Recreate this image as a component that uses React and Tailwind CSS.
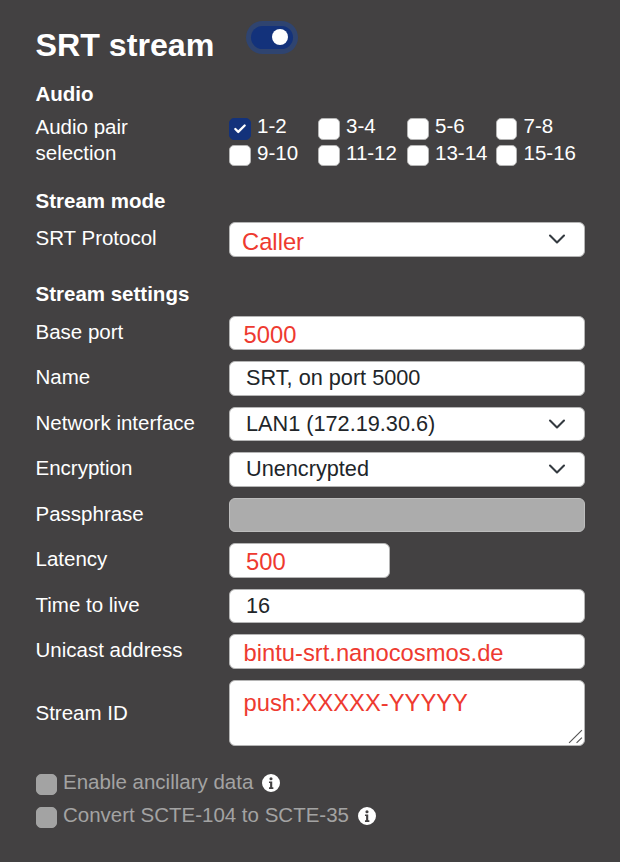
import React from 'react';
import { ChevronDown, Check } from 'lucide-react';

const audioPairs = ['1-2', '3-4', '5-6', '7-8', '9-10', '11-12', '13-14', '15-16'];

function Row({ label, children }) {
  return (
    <div className="flex items-center h-[34.5px]">
      <div className="w-[193.5px] shrink-0 -mt-[2px]">{label}</div>
      <div className="flex-1">{children}</div>
    </div>
  );
}

function Field({ value, red, large, className = 'w-full' }) {
  return (
    <input
      readOnly
      value={value}
      className={`${className} h-[34.5px] rounded-[6px] border border-[#b5b5b5] bg-white outline-none ${
        red ? 'text-[#ee3a30] text-[23.75px] pt-[4px]' : 'text-[#212529] text-[21.7px]'
      } ${large ? 'pl-[13.5px]' : 'pl-[16px]'}`}
    />
  );
}

function Dropdown({ value, red }) {
  return (
    <div className="relative">
      <select
        defaultValue={value}
        className={`w-full h-[34.5px] appearance-none rounded-[6px] border border-[#b5b5b5] bg-white outline-none ${
          red ? 'pl-[12px] pt-[5px] text-[#ee3a30] text-[23.75px]' : 'pl-[16px] text-[#212529] text-[21.7px]'
        }`}
      >
        <option>{value}</option>
      </select>
      <ChevronDown className="absolute right-[14px] top-[3px] w-[28px] h-[28px] text-[#343a40] pointer-events-none" strokeWidth={1.8} />
    </div>
  );
}

function Box({ checked, disabled }) {
  return (
    <span
      className={`flex items-center justify-center w-[21.5px] h-[21.5px] shrink-0 rounded-[5px] border ${
        checked ? 'bg-[#13327b] border-[#13327b]' : disabled ? 'bg-[#a3a3a3] border-[#a3a3a3]' : 'bg-white border-[#b5b5b5]'
      }`}
    >
      {checked && <Check className="w-[14px] h-[14px] text-white" strokeWidth={4} />}
    </span>
  );
}

function InfoIcon() {
  return (
    <svg viewBox="0 0 16 16" className="w-[18px] h-[18px] shrink-0" fill="white">
      <path d="M8 0a8 8 0 1 0 0 16A8 8 0 0 0 8 0zm0 2.8a1.4 1.4 0 1 1 0 2.8 1.4 1.4 0 0 1 0-2.8zM6.2 6.6h2.9v5.2h1v1.5H6.2v-1.5h1V8.1h-1V6.6z" fillRule="evenodd" />
    </svg>
  );
}

export default function App() {
  return (
    <div className="w-[620px] h-[862px] overflow-hidden bg-[#434142] text-white text-[20.5px] leading-[26px] pl-[35.5px] pr-[35px] font-['Liberation_Sans',Arial,sans-serif]">
      <div className="flex items-start h-[81px]">
        <h1 className="text-[32.2px] font-bold leading-[37px] mt-[27px]">SRT stream</h1>
        <div className="ml-[37px] mt-[25.5px] flex items-center justify-end w-[42px] h-[23px] rounded-full bg-[#13327b] ring-[5px] ring-[#2f4470] pr-[5px]">
          <span className="w-[16px] h-[16px] rounded-full bg-white" />
        </div>
      </div>

      <div className="font-bold leading-[26px]">Audio</div>
      <div className="flex mt-[7px] h-[52px]">
        <div className="w-[193.5px] shrink-0">Audio pair<br />selection</div>
        <div className="grid grid-cols-[89px_89px_88.5px_auto] content-start">
          {audioPairs.map((pair, i) => (
            <div key={pair} className="flex items-start h-[26.5px] gap-[6.5px]">
              <span className="mt-[4px]"><Box checked={i === 0} /></span>
              <span className="-mt-[1px]">{pair}</span>
            </div>
          ))}
        </div>
      </div>

      <div className="font-bold mt-[22px]">Stream mode</div>
      <div className="mt-[8px]">
        <Row label="SRT Protocol"><Dropdown value="Caller" red /></Row>
      </div>

      <div className="font-bold mt-[24px]">Stream settings</div>
      <div className="flex flex-col gap-[11px] mt-[9px]">
        <Row label="Base port"><Field value="5000" red large /></Row>
        <Row label="Name"><Field value="SRT, on port 5000" /></Row>
        <Row label="Network interface"><Dropdown value="LAN1 (172.19.30.6)" /></Row>
        <Row label="Encryption"><Dropdown value="Unencrypted" /></Row>
        <Row label="Passphrase">
          <div className="h-[34.5px] rounded-[6px] border border-[#bdbdbd] bg-[#acacac]" />
        </Row>
        <Row label="Latency"><Field value="500" red className="w-[161px]" /></Row>
        <Row label="Time to live"><Field value="16" /></Row>
        <Row label="Unicast address"><Field value="bintu-srt.nanocosmos.de" red large /></Row>
        <div className="flex items-center h-[66px]">
          <div className="w-[193.5px] shrink-0">Stream ID</div>
          <div className="relative flex-1 h-[66px]">
            <textarea
              readOnly
              value="push:XXXXX-YYYYY"
              className="block w-full h-[66px] rounded-[6px] border border-[#b5b5b5] bg-white text-[#ee3a30] text-[23.75px] leading-[28px] pl-[13.5px] pt-[8px] outline-none resize-none"
            />
            <svg viewBox="0 0 14 14" className="absolute right-[2px] bottom-[2px] w-[15px] h-[15px]" stroke="#555" strokeWidth="1.1" fill="none">
              <path d="M1 13 13 1M8 13l5-5" />
            </svg>
          </div>
        </div>
      </div>

      <div className="mt-[24px] flex flex-col gap-[7px] text-[#a3a3a3]">
        <div className="flex items-center h-[26px]">
          <span className="mt-[4px]"><Box disabled /></span>
          <span className="ml-[6px] -mt-[1px]">Enable ancillary data</span>
          <span className="ml-[9px]"><InfoIcon /></span>
        </div>
        <div className="flex items-center h-[26px]">
          <span className="mt-[4px]"><Box disabled /></span>
          <span className="ml-[6px] -mt-[1px]">Convert SCTE-104 to SCTE-35</span>
          <span className="ml-[9px]"><InfoIcon /></span>
        </div>
      </div>
    </div>
  );
}
